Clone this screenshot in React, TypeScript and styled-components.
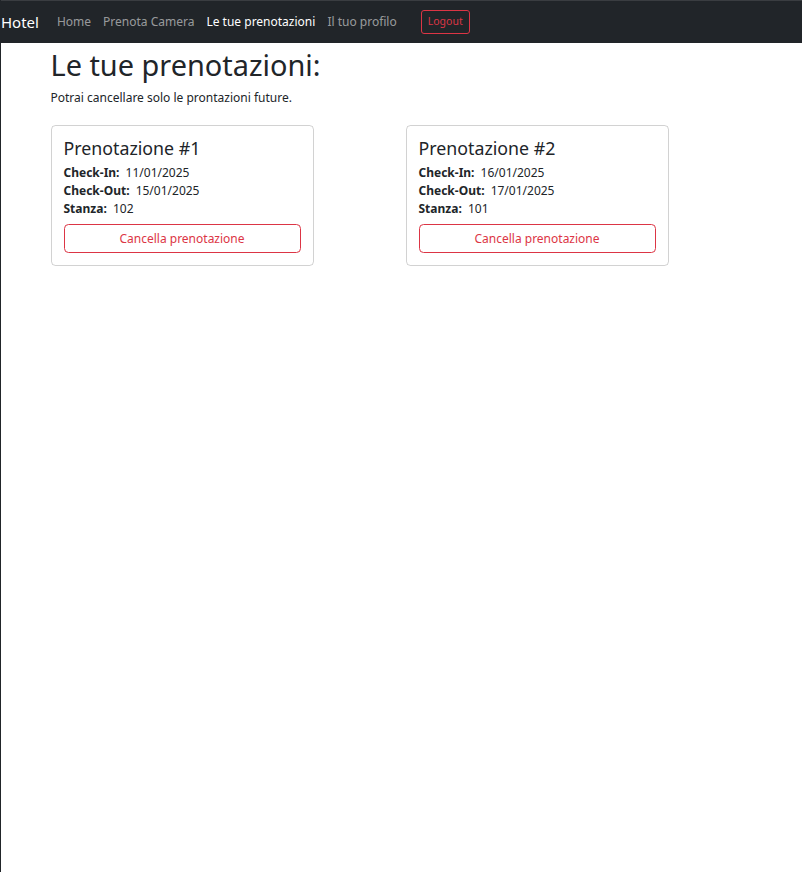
import React from "react";
import styled, { createGlobalStyle } from "styled-components";

const GlobalStyle = createGlobalStyle`
  * { box-sizing: border-box; }
  html, body { margin: 0; padding: 0; background: #fff; }
  body {
    font-family: "Noto Sans", "DejaVu Sans", sans-serif;
    color: #212529;
    font-size: 12px;
    line-height: 1.5;
  }
`;

const Page = styled.div`
  min-height: 100vh;
  border-left: 1px solid #212529;
`;

const Navbar = styled.nav`
  height: 43px;
  background: #212529;
  border-top: 1px solid #3a3d41;
  display: flex;
  align-items: center;
`;

const Brand = styled.a`
  font-size: 15px;
  line-height: 1.5;
  color: #fff;
  text-decoration: none;
  margin-right: 12px;
`;

const NavList = styled.ul`
  list-style: none;
  margin: 0;
  padding: 0;
  display: flex;
  align-items: center;
`;

const NavLink = styled.a<{ $active?: boolean }>`
  display: block;
  padding: 0 6px;
  font-size: 12px;
  line-height: 1.5;
  text-decoration: none;
  color: ${(p) => (p.$active ? "#fff" : "rgba(255,255,255,0.55)")};
`;

const LogoutButton = styled.button`
  margin-left: 18px;
  font-family: inherit;
  font-size: 10.5px;
  line-height: 1.5;
  padding: 3px 6px;
  color: #dc3545;
  background: transparent;
  border: 1px solid #dc3545;
  border-radius: 3px;
  cursor: pointer;
`;

const Container = styled.main`
  width: 720px;
  margin: 0 auto;
  padding: 5px 9px 0;
`;

const Title = styled.h1`
  margin: 0 0 6px;
  font-size: 28.9px;
  font-weight: 400;
  line-height: 1.2;
`;

const Lead = styled.p`
  margin: 0 0 18px;
`;

const CardRow = styled.div`
  display: flex;
  gap: 92px;
`;

const Card = styled.div`
  width: 263px;
  border: 1px solid rgba(0, 0, 0, 0.175);
  border-radius: 4.5px;
  padding: 12px;
  display: flex;
  flex-direction: column;
`;

const CardTitle = styled.h4`
  margin: 0 0 5px;
  font-size: 17.8px;
  font-weight: 400;
  line-height: 1.2;
`;

const Line = styled.p`
  margin: 0;
`;

const Label = styled.strong`
  font-weight: 700;
  margin-right: 3px;
`;

const DangerButton = styled.button`
  margin-top: 6px;
  font-family: inherit;
  font-size: 12px;
  line-height: 1.5;
  padding: 4.5px 9px;
  color: #dc3545;
  background: transparent;
  border: 1px solid #dc3545;
  border-radius: 4.5px;
  cursor: pointer;
`;

const bookings = [
  { id: 1, checkIn: "11/01/2025", checkOut: "15/01/2025", room: "102" },
  { id: 2, checkIn: "16/01/2025", checkOut: "17/01/2025", room: "101" },
];

export default function App() {
  return (
    <Page>
      <GlobalStyle />
      <Navbar>
        <Brand href="#">Hotel</Brand>
        <NavList>
          <li><NavLink href="#">Home</NavLink></li>
          <li><NavLink href="#">Prenota Camera</NavLink></li>
          <li><NavLink href="#" $active>Le tue prenotazioni</NavLink></li>
          <li><NavLink href="#">Il tuo profilo</NavLink></li>
          <li><LogoutButton>Logout</LogoutButton></li>
        </NavList>
      </Navbar>
      <Container>
        <Title>Le tue prenotazioni:</Title>
        <Lead>Potrai cancellare solo le prontazioni future.</Lead>
        <CardRow>
          {bookings.map((b) => (
            <Card key={b.id}>
              <CardTitle>Prenotazione #{b.id}</CardTitle>
              <Line><Label>Check-In:</Label> {b.checkIn}</Line>
              <Line><Label>Check-Out:</Label> {b.checkOut}</Line>
              <Line><Label>Stanza:</Label> {b.room}</Line>
              <DangerButton>Cancella prenotazione</DangerButton>
            </Card>
          ))}
        </CardRow>
      </Container>
    </Page>
  );
}
